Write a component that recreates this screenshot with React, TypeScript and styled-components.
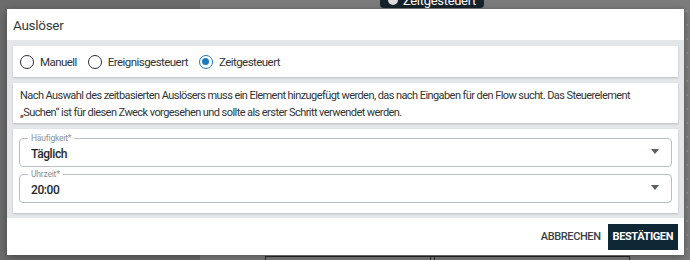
import styled, { createGlobalStyle } from 'styled-components';

const GlobalStyle = createGlobalStyle`
  html, body {
    margin: 0;
    padding: 0;
  }
  body {
    font-family: Roboto, "Noto Sans", "Liberation Sans", sans-serif;
    color: #2f3437;
  }
`;

const Page = styled.div`
  position: relative;
  width: 690px;
  height: 260px;
  overflow: hidden;
  display: flex;
  background: #7a7a7a;
`;

const Sidebar = styled.div`
  width: 200px;
  background: #6c6c6c;
`;

const Canvas = styled.div`
  position: relative;
  flex: 1;
  background-color: #7c7c7c;
  background-image: radial-gradient(#8e8e8e 1px, transparent 1.2px);
  background-size: 14px 14px;
  background-position: 4px 4px;
`;

const Node = styled.div<{ $left: number; $top: number; $width: number }>`
  position: absolute;
  left: ${(p) => p.$left}px;
  top: ${(p) => p.$top}px;
  width: ${(p) => p.$width}px;
  height: 30px;
  border-radius: 0 0 4px 4px;
  background: #16232b;
  color: #fff;
  font-size: 13px;
  letter-spacing: -0.3px;
  display: flex;
  align-items: flex-end;
  justify-content: center;
  gap: 5px;
  box-sizing: border-box;
`;

const NodeDot = styled.span`
  width: 10px;
  height: 10px;
  border-radius: 50%;
  background: #ddd;
  margin-bottom: 3px;
`;

const Outline = styled.div<{ $left: number; $width: number }>`
  position: absolute;
  left: ${(p) => p.$left}px;
  top: 256px;
  width: ${(p) => p.$width}px;
  height: 30px;
  border: 1px solid #2a2a2a;
  box-sizing: border-box;
`;

const Dialog = styled.div`
  position: absolute;
  left: 7px;
  top: 9px;
  width: 677px;
  height: 246px;
  background: #fff;
  box-shadow: 0 2px 8px rgba(0, 0, 0, 0.35);
  display: flex;
  flex-direction: column;
`;

const Header = styled.div`
  height: 31px;
  display: flex;
  align-items: center;
  padding: 0 6px;
  font-size: 13.5px;
  letter-spacing: -0.3px;
  color: #333b40;
`;

const Body = styled.div`
  background: #e3e7ea;
  padding: 6px 6px 5px;
  display: flex;
  flex-direction: column;
  gap: 6px;
`;

const Card = styled.div`
  background: #fff;
  box-shadow: 0 1px 2px rgba(0, 0, 0, 0.18);
`;

const RadioRow = styled(Card)`
  height: 31px;
  display: flex;
  align-items: center;
  padding: 0 7px;
  gap: 11px;
`;

const RadioOption = styled.label`
  display: flex;
  align-items: center;
  gap: 6px;
  font-size: 11.5px;
  letter-spacing: -0.55px;
  color: #2f3437;
`;

const RadioCircle = styled.span<{ $checked?: boolean }>`
  width: 14px;
  height: 14px;
  border-radius: 50%;
  box-sizing: border-box;
  border: 1.6px solid ${(p) => (p.$checked ? '#1b7bbd' : '#2b2f33')};
  display: flex;
  align-items: center;
  justify-content: center;
  &::after {
    content: '';
    width: 7px;
    height: 7px;
    border-radius: 50%;
    background: ${(p) => (p.$checked ? '#1b7bbd' : 'transparent')};
  }
`;

const Info = styled(Card)`
  height: 40px;
  box-sizing: border-box;
  padding: 4px 7px;
  font-size: 11px;
  letter-spacing: -0.57px;
  line-height: 17px;
  white-space: nowrap;
  color: #2f3437;
`;

const Fields = styled(Card)`
  padding: 9px 6px 10px;
  display: flex;
  flex-direction: column;
  gap: 7px;
`;

const Field = styled.fieldset`
  margin: 0;
  height: 29px;
  box-sizing: border-box;
  border: 1px solid #b8bec3;
  border-radius: 4px;
  padding: 0 12px 0 11px;
  display: flex;
  align-items: center;
  justify-content: space-between;
  position: relative;
`;

const Legend = styled.legend`
  position: absolute;
  top: -6px;
  left: 8px;
  padding: 0 3px;
  background: #fff;
  font-size: 8.5px;
  letter-spacing: -0.2px;
  line-height: 10px;
  color: #8a9095;
`;

const Value = styled.span`
  font-size: 12px;
  font-weight: 500;
  letter-spacing: -0.4px;
  color: #23292d;
  padding-top: 8px;
`;

const Caret = styled.span`
  width: 0;
  height: 0;
  border-left: 4.5px solid transparent;
  border-right: 4.5px solid transparent;
  border-top: 5px solid #5a6066;
  margin-top: 2px;
`;

const Footer = styled.div`
  flex: 1;
  display: flex;
  align-items: center;
  justify-content: flex-end;
  padding: 0 6px 0 0;
  gap: 7px;
`;

const Button = styled.button<{ $primary?: boolean }>`
  height: 26px;
  border: none;
  padding: 0 ${(p) => (p.$primary ? '5px' : '0')};
  font-family: Roboto, "Noto Sans", sans-serif;
  font-size: 11px;
  font-weight: ${(p) => (p.$primary ? 700 : 500)};
  letter-spacing: -0.4px;
  background: ${(p) => (p.$primary ? '#0e2836' : 'transparent')};
  color: ${(p) => (p.$primary ? '#fff' : '#3a4248')};
  text-transform: uppercase;
  cursor: pointer;
`;

const options = [
  { label: 'Manuell', checked: false },
  { label: 'Ereignisgesteuert', checked: false },
  { label: 'Zeitgesteuert', checked: true },
];

const App = () => {
  return (
    <>
      <GlobalStyle />
      <Page>
        <Sidebar />
        <Canvas>
          <Node $left={180} $top={-22} $width={104}>
            <NodeDot />
            Zeitgesteuert
          </Node>
          <Outline $left={65} $width={170} />
          <Outline $left={230} $width={200} />
        </Canvas>
        <Dialog>
          <Header>Auslöser</Header>
          <Body>
            <RadioRow>
              {options.map((o) => (
                <RadioOption key={o.label}>
                  <RadioCircle $checked={o.checked} />
                  {o.label}
                </RadioOption>
              ))}
            </RadioRow>
            <Info>
              Nach Auswahl des zeitbasierten Auslösers muss ein Element hinzugefügt werden, das nach Eingaben für den Flow sucht. Das Steuerelement
              <br />
              „Suchen“ ist für diesen Zweck vorgesehen und sollte als erster Schritt verwendet werden.
            </Info>
            <Fields>
              <Field>
                <Legend>Häufigkeit*</Legend>
                <Value>Täglich</Value>
                <Caret />
              </Field>
              <Field>
                <Legend>Uhrzeit*</Legend>
                <Value>20:00</Value>
                <Caret />
              </Field>
            </Fields>
          </Body>
          <Footer>
            <Button>Abbrechen</Button>
            <Button $primary>Bestätigen</Button>
          </Footer>
        </Dialog>
      </Page>
    </>
  );
};

export default App;
